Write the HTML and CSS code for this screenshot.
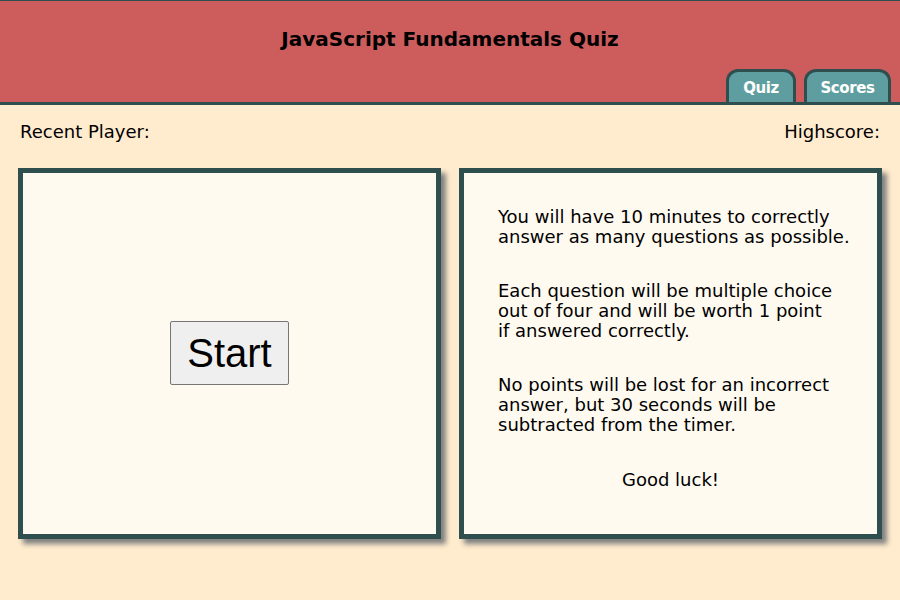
FILE: index.html
```html
<!DOCTYPE html>
<html lang="en">
<head>
<meta charset="utf-8">
<title>JavaScript Fundamentals Quiz</title>
<link rel="stylesheet" href="styles.css">
</head>
<body>
<header class="header">
  <h1 class="title">JavaScript Fundamentals Quiz</h1>
  <nav class="tabs">
    <a class="tab" href="#">Quiz</a>
    <a class="tab" href="#">Scores</a>
  </nav>
</header>
<main class="main">
  <div class="info-row">
    <span>Recent Player:</span>
    <span>Highscore:</span>
  </div>
  <div class="cards">
    <section class="card card-start">
      <button class="start-btn" type="button">Start</button>
    </section>
    <section class="card card-rules">
      <p>You will have 10 minutes to correctly<br>answer as many questions as possible.</p>
      <p>Each question will be multiple choice<br>out of four and will be worth 1 point<br>if answered correctly.</p>
      <p>No points will be lost for an incorrect<br>answer, but 30 seconds will be<br>subtracted from the timer.</p>
      <p class="luck">Good luck!</p>
    </section>
  </div>
</main>
</body>
</html>
```
FILE: styles.css
```css
* { box-sizing: border-box; }
html, body { margin: 0; padding: 0; }
body {
  background: #ffebcd;
  font-family: "Trebuchet MS", "DejaVu Sans", sans-serif;
  color: #000;
  width: 900px;
  height: 600px;
  overflow: hidden;
}
.header {
  position: relative;
  height: 105px;
  background: #cd5c5c;
  border-top: 1px solid #2f4f4f;
  border-bottom: 3px solid #2f4f4f;
  display: flex;
  flex-direction: column;
  align-items: center;
}
.title {
  margin: 24px 0 0;
  font-size: 20px;
  font-weight: bold;
  line-height: 28px;
}
.tabs {
  position: absolute;
  right: 9px;
  bottom: 0;
  display: flex;
  gap: 8px;
}
.tab {
  display: block;
  height: 33px;
  width: 70px;
  padding-top: 5px;
  text-align: center;
  background: #5f9ea0;
  border: 3px solid #2f4f4f;
  border-bottom: none;
  border-radius: 12px 12px 0 0;
  color: #fff;
  font-weight: bold;
  font-size: 15px;
  letter-spacing: -0.4px;
  text-decoration: none;
  line-height: 22px;
}
.tab + .tab {
  width: 87px;
}
.main {
  padding: 0 20px 0 18px;
}
.info-row {
  display: flex;
  justify-content: space-between;
  padding: 0 0 0 2px;
  height: 63px;
  align-items: flex-start;
  padding-top: 16px;
  font-size: 18px;
  line-height: 22px;
}
.cards {
  display: grid;
  grid-template-columns: 423px 423px;
  gap: 18px;
}
.card {
  height: 371px;
  background: #fffaf0;
  border: 5px solid #2f4f4f;
  box-shadow: 5px 5px 5px #808080;
}
.card-start {
  display: flex;
  align-items: center;
  justify-content: center;
}
.start-btn {
  font-family: "Liberation Sans", Arial, sans-serif;
  font-size: 40px;
  line-height: 46px;
  padding: 8px 16px;
  background: #efefef;
  border: 1px solid #767676;
  border-radius: 2px;
  color: #000;
  margin-top: -1px;
}
.card-rules {
  padding: 34px 10px 0 34px;
  font-size: 18px;
  line-height: 20px;
  white-space: nowrap;
}
.card-rules p {
  margin: 0 0 34px;
}
.card-rules .luck {
  text-align: center;
  margin: 35px 0 0 -24px;
}
```
